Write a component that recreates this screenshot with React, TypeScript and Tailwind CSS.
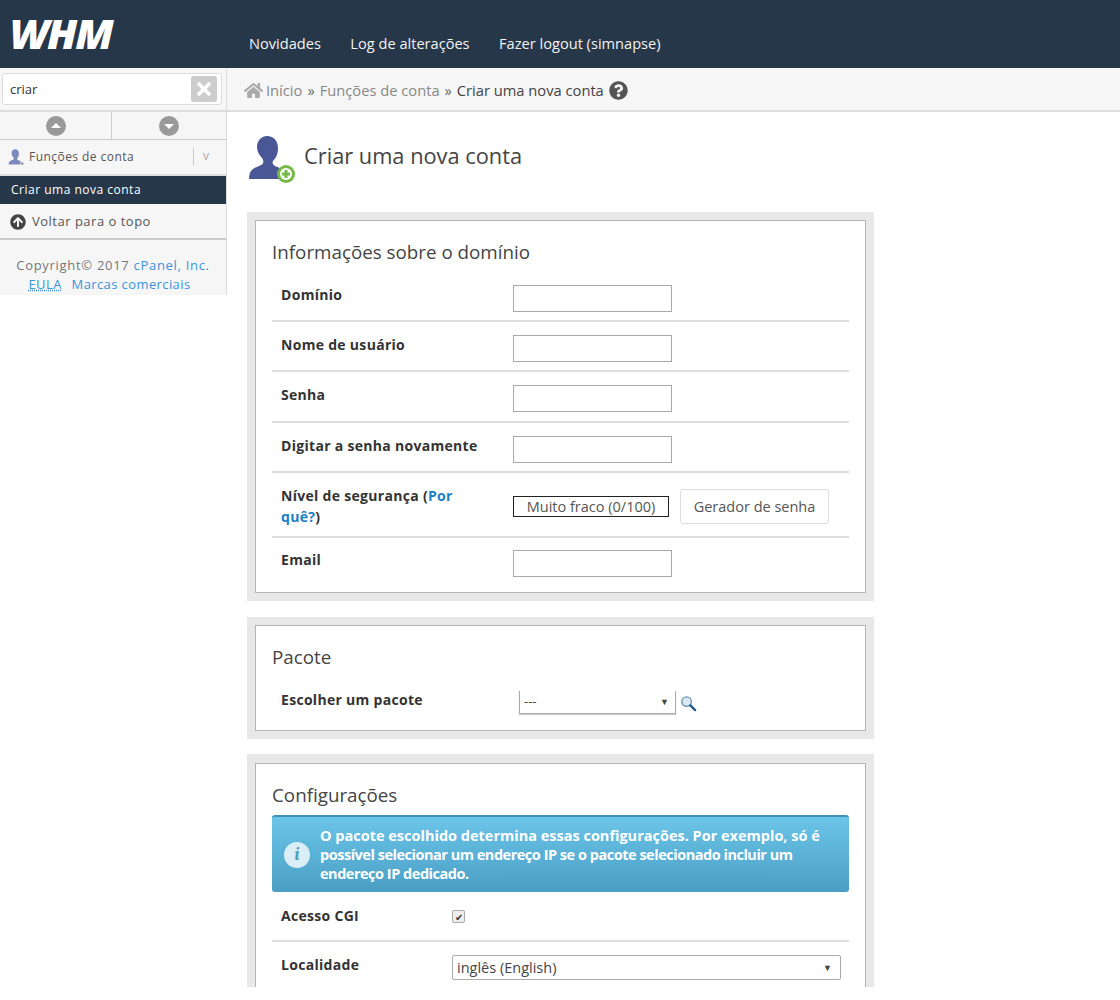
import { FaHome, FaQuestionCircle, FaArrowCircleUp, FaTimes } from 'react-icons/fa'

const font = { fontFamily: '"Open Sans", "Noto Sans", sans-serif' }

function UserIcon({ className, badge }: { className: string; badge: 'plus' | 'dot' }) {
  return (
    <svg viewBox="0 0 48 48" className={className}>
      <path
        d="M20 1c7 0 11 5 11 12 0 6-2 10-5 13-1 2 0 4 2 5 5 2 9 4 10 7l1 6H2c0-4 1-8 4-10 4-3 9-3 10-6 1-2 0-3-1-5-3-3-5-7-5-11C10 6 14 1 20 1z"
        fill={badge === 'plus' ? '#4a5796' : '#7d88bd'}
      />
      {badge === 'plus' ? (
        <>
          <circle cx="39" cy="39" r="9" fill="#76b947" />
          <circle cx="39" cy="39" r="6" fill="#fff" />
          <path d="M37.5 35h3v2.500H43v3h-2.500V43h-3v-2.500H35v-3h2.500z" fill="#76b947" />
        </>
      ) : (
        <circle cx="40" cy="41" r="5" fill="#999" stroke="#fff" strokeWidth="2" />
      )}
    </svg>
  )
}

function ArrowCircle({ up }: { up: boolean }) {
  return (
    <svg viewBox="0 0 20 20" className="w-[20px] h-[20px]">
      <circle cx="10" cy="10" r="10" fill="#999" />
      <path d={up ? 'M5 12l5-5 5 5z' : 'M5 8l5 5 5-5z'} fill="#fff" />
    </svg>
  )
}

function Section({ title, className, children }: { title: string; className: string; children: React.ReactNode }) {
  return (
    <section className={`w-[627px] bg-[#e8e8e8] p-[8px] ${className}`}>
      <div className="h-full bg-white border border-[#b5b5b5] px-[16px]">
        <h2 className="text-[18.8px] leading-[24px] text-[#444] pt-[19px]">{title}</h2>
        {children}
      </div>
    </section>
  )
}

const labelClass = 'pl-[9px] text-[14px] leading-[20px] font-bold tracking-[0.3px] text-[#333]'

function FieldRow({ label, height, last }: { label: string; height: string; last?: boolean }) {
  return (
    <div className={`flex ${height} ${last ? '' : 'border-b-2 border-[#ddd]'}`}>
      <div className={`w-[241px] pt-[2px] ${labelClass}`}>{label}</div>
      <input className="w-[159px] h-[27px] mt-[2px] border border-[#aaa] bg-white" />
    </div>
  )
}

export default function App() {
  return (
    <div className="w-[1120px] h-[987px] overflow-hidden bg-white" style={font}>
      <header className="h-[68px] bg-[#263749] flex items-start">
        <div className="w-[249px] pl-[9px] pt-[14px] text-white italic font-extrabold text-[40px] leading-none tracking-[-2px] origin-left scale-x-[1.06]">WHM</div>
        <nav className="flex gap-[29.5px] pt-[33px] text-[14.6px] text-[#f2f2f2]">
          <span>Novidades</span>
          <span>Log de alterações</span>
          <span>Fazer logout (simnapse)</span>
        </nav>
      </header>

      <div className="flex">
        <aside className="w-[227px] h-[227px] bg-[#f6f6f6] border-r border-[#ddd] shrink-0 flex flex-col">
          <div className="h-[44px] pl-[2px] pr-[4px] pt-[5px] border-b-2 border-[#ddd]">
            <div className="h-[32px] bg-white border border-[#ddd] rounded-[3px] flex items-center justify-between pl-[7px] pr-[4px]">
              <span className="text-[13px] text-[#333] pt-[2px]">criar</span>
              <span className="w-[26px] h-[26px] rounded-[3px] bg-[#ccc] flex items-center justify-center">
                <FaTimes className="text-white text-[20px]" />
              </span>
            </div>
          </div>
          <div className="h-[28px] flex border-b border-[#ccc]">
            <div className="w-[112px] flex items-center justify-center border-r border-[#ccc]"><ArrowCircle up /></div>
            <div className="flex-1 flex items-center justify-center"><ArrowCircle up={false} /></div>
          </div>
          <div className="h-[36px] flex items-center pl-[8px] border-b-2 border-[#ddd]">
            <UserIcon className="w-[17px] h-[17px] mr-[4px]" badge="dot" />
            <span className="text-[12px] tracking-[0.45px] text-[#555] w-[164px]">Funções de conta</span>
            <span className="h-[18px] border-l border-[#ccc] pl-[9px] text-[#aaa] text-[12px] leading-[16px]">v</span>
          </div>
          <div className="h-[28px] bg-[#263749] text-white text-[12px] tracking-[0.5px] leading-[28px] pl-[11px]">Criar uma nova conta</div>
          <div className="h-[36px] flex items-center pl-[10px] pt-[2px] border-b-2 border-[#ccc] text-[13px] tracking-[0.5px] text-[#555]">
            <FaArrowCircleUp className="text-[#444] text-[16px] mr-[6px]" />
            Voltar para o topo
          </div>
          <div className="pt-[16px] text-center text-[13px] leading-[19px] tracking-[0.7px] text-[#777]">
            <div>Copyright© 2017 <span className="text-[#3a94dc]">cPanel, Inc.</span></div>
            <div className="text-[#3a94dc] tracking-[0.4px] pr-[7px]"><span className="underline decoration-dotted mr-[6px]">EULA</span> Marcas comerciais</div>
          </div>
        </aside>

        <main className="flex-1">
          <div className="h-[44px] bg-[#f6f6f6] border-b-2 border-[#ddd] flex items-center pl-[17px] pt-[3px] text-[14.7px]">
            <FaHome className="text-[#aaa] text-[19px] mr-[3px]" />
            <span className="text-[#888]">Início</span>
            <span className="text-[#666] mx-[5px]">»</span>
            <span className="text-[#888]">Funções de conta</span>
            <span className="text-[#666] mx-[5px]">»</span>
            <span className="text-[#444]">Criar uma nova conta</span>
            <FaQuestionCircle className="text-[#555] text-[19px] ml-[5px]" />
          </div>

          <div className="pl-[20px]">
            <div className="h-[100px] flex items-start pt-[23px]">
              <UserIcon className="w-[48px] h-[48px]" badge="plus" />
              <h1 className="ml-[9px] mt-[5px] text-[21.8px] leading-[32px] text-[#444]">Criar uma nova conta</h1>
            </div>

            <Section title="Informações sobre o domínio" className="h-[389px]">
              <div className="pt-[19px]">
                <FieldRow label="Domínio" height="h-[39px]" />
                <FieldRow label="Nome de usuário" height="h-[50px] pt-[11px]" />
                <FieldRow label="Senha" height="h-[51px] pt-[11px]" />
                <FieldRow label="Digitar a senha novamente" height="h-[50px] pt-[11px]" />
                <div className="flex h-[65px] border-b-2 border-[#ddd] pt-[12px]">
                  <div className={`w-[241px] pr-[40px] !leading-[21px] ${labelClass}`}>
                    Nível de segurança (<span className="text-[#1b7fc8]">Por quê?</span>)
                  </div>
                  <div className="w-[156px] h-[21px] mt-[11px] border border-[#222] text-[14.5px] leading-[20px] text-center text-[#555]">Muito fraco (0/100)</div>
                  <button className="ml-[11px] w-[149px] h-[35px] mt-[4px] border border-[#ddd] rounded-[3px] text-[14.5px] text-[#555]">Gerador de senha</button>
                </div>
                <FieldRow label="Email" height="h-[54px] pt-[10px]" last />
              </div>
            </Section>

            <Section title="Pacote" className="h-[122px] mt-[16px]">
              <div className="flex pt-[21px]">
                <div className={`w-[247px] ${labelClass}`}>Escolher um pacote</div>
                <div className="w-[157px] h-[23px] mt-[1px] border-x border-b border-[#aaa] shadow-[0_1px_1px_#ccc] flex items-center justify-between pl-[4px] pr-[6px] text-[13px] text-[#444]">
                  <span>---</span>
                  <span className="text-[9px]">▼</span>
                </div>
                <svg viewBox="0 0 18 18" className="w-[17px] h-[17px] ml-[4px] mt-[5px]">
                  <circle cx="7" cy="7" r="5" fill="#dbe9f5" stroke="#6b93b5" strokeWidth="1.500" />
                  <path d="M11 11l5 5" stroke="#235a8c" strokeWidth="2.500" strokeLinecap="round" />
                </svg>
              </div>
            </Section>

            <Section title="Configurações" className="mt-[15px] pt-[9px]">
              <div className="mt-[8px] h-[77px] rounded-[3px] bg-gradient-to-b from-[#6cc5e9] to-[#4a9ec4] border-t-2 border-[#3f8fb5] flex items-center pl-[12px] pr-[16px]">
                <span className="w-[26px] h-[26px] rounded-full bg-[#d9eef6] shrink-0 flex items-center justify-center font-serif italic font-bold text-[#4a9ec4] text-[18px]">i</span>
                <p className="ml-[10px] text-[14.5px] leading-[19px] font-bold text-white">
                  <span className="block">O pacote escolhido determina essas configurações. Por exemplo, só é</span>
                  <span className="block tracking-[-0.48px]">possível selecionar um endereço IP se o pacote selecionado incluir um</span>
                  <span className="block tracking-[-0.48px]">endereço IP dedicado.</span>
                </p>
              </div>
              <div className="flex h-[50px] border-b-2 border-[#ddd] pt-[14px]">
                <div className={`w-[180px] ${labelClass}`}>Acesso CGI</div>
                <span className="w-[13px] h-[13px] mt-[4px] border border-[#aaa] rounded-[2px] bg-[#eee] flex items-center justify-center text-[10px] leading-none text-[#333]">✔</span>
              </div>
              <div className="flex h-[60px] pt-[13px]">
                <div className={`w-[180px] ${labelClass}`}>Localidade</div>
                <div className="w-[389px] h-[25px] border border-[#aaa] rounded-[2px] flex items-center justify-between pl-[4px] pr-[8px] text-[14.5px] text-[#444]">
                  <span>inglês (English)</span>
                  <span className="text-[9px]">▼</span>
                </div>
              </div>
            </Section>
          </div>
        </main>
      </div>
    </div>
  )
}
